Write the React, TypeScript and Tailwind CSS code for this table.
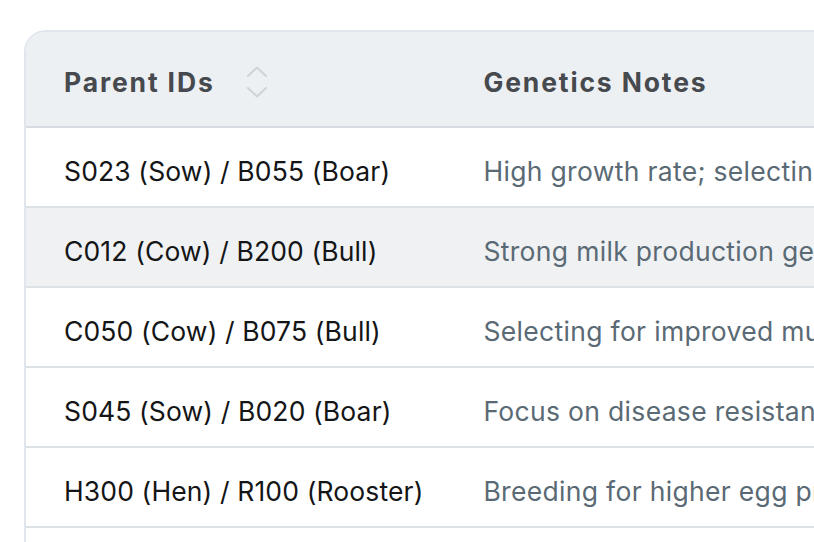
import React from "react";

type Row = { parents: string; notes: string };

const rows: Row[] = [
  { parents: "S023 (Sow) / B055 (Boar)", notes: "High growth rate; selecting for leaner meat and larger litters" },
  { parents: "C012 (Cow) / B200 (Bull)", notes: "Strong milk production genetics from both lines" },
  { parents: "C050 (Cow) / B075 (Bull)", notes: "Selecting for improved muscle development and calving ease" },
  { parents: "S045 (Sow) / B020 (Boar)", notes: "Focus on disease resistance and feed efficiency" },
  { parents: "H300 (Hen) / R100 (Rooster)", notes: "Breeding for higher egg production and hardiness" },
  { parents: "E014 (Ewe) / R022 (Ram)", notes: "Wool quality and twin lambing rate" },
];

function SortIcon() {
  return (
    <svg width="22" height="34" viewBox="0 0 22 34" fill="none" className="ml-[31px] shrink-0">
      <path d="M2 11 L11 2.5 L20 11" stroke="#cdd3d9" strokeWidth="2" strokeLinecap="round" strokeLinejoin="round" />
      <path d="M2 23 L11 31.5 L20 23" stroke="#cdd3d9" strokeWidth="2" strokeLinecap="round" strokeLinejoin="round" />
    </svg>
  );
}

export default function App() {
  return (
    <div
      className="w-[814px] h-[542px] overflow-hidden bg-white pt-[30px] pl-[24px]"
      style={{ fontFamily: "Inter, 'Noto Sans', sans-serif" }}
    >
      <div className="w-[1200px] rounded-tl-[22px] border-2 border-[#e1e6ec] overflow-hidden">
        <table className="w-full border-collapse text-left">
          <thead>
            <tr className="bg-[#edf0f3] border-b-2 border-[#d6dce1]">
              <th className="h-[95px] pl-[38px] pr-[20px] pt-[6px] pb-0 align-middle">
                <div className="flex items-center text-[26.5px] leading-[32px] font-bold tracking-[0.07em] text-[#46494d]">
                  Parent IDs
                  <SortIcon />
                </div>
              </th>
              <th className="pl-[40px] pr-[40px] pt-[6px] pb-0 align-middle">
                <div className="text-[26.5px] leading-[32px] font-bold tracking-[0.07em] text-[#46494d]">
                  Genetics Notes
                </div>
              </th>
            </tr>
          </thead>
          <tbody>
            {rows.map((r, i) => (
              <tr
                key={r.parents}
                className={`border-b-2 border-[#dde2e7] ${i === 1 ? "bg-[#eff1f3]" : "bg-white"}`}
              >
                <td className="h-[80px] pl-[38px] pr-[20px] pt-[8px] pb-0 align-middle text-[26.5px] leading-[32px] tracking-[0.005em] text-[#141516] whitespace-nowrap">
                  {r.parents}
                </td>
                <td className="pl-[40px] pr-[40px] pt-[8px] pb-0 align-middle text-[26.5px] leading-[32px] tracking-[0.012em] text-[#5a6a75] whitespace-nowrap">
                  {r.notes}
                </td>
              </tr>
            ))}
          </tbody>
        </table>
      </div>
    </div>
  );
}
